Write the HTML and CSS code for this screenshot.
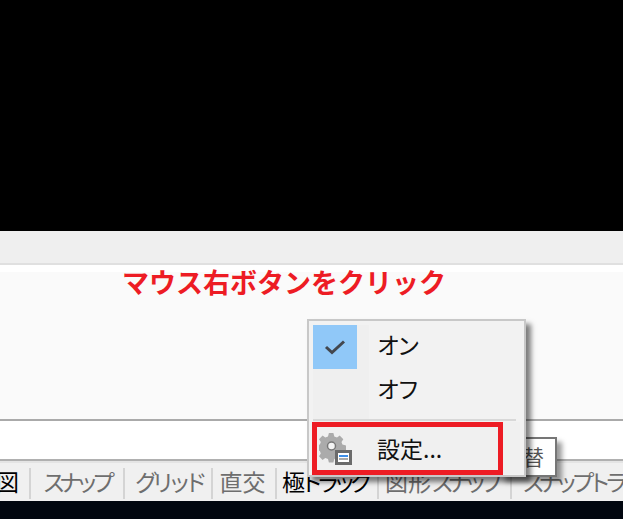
FILE: index.html
```html
<!DOCTYPE html>
<html lang="ja">
<head>
<meta charset="utf-8">
<title>極トラッキング設定</title>
<link rel="stylesheet" href="styles.css">
</head>
<body>
<div class="page">
  <div class="black"></div>
  <div class="ribbon"></div>
  <div class="history">
    <div class="note">マウス右ボタンをクリック</div>
  </div>
  <div class="cmdline"></div>
  <div class="status">
    <div class="cell c0"><span class="on">図</span></div>
    <div class="cell c1"><span class="kana">スナップ</span></div>
    <div class="cell c2"><span class="kana">グリッド</span></div>
    <div class="cell c3"><span>直交</span></div>
    <div class="cell c4"><span class="on">極<span class="kana tight">トラック</span></span></div>
    <div class="cell c5"><span>図形<span class="kana">スナップ</span></span></div>
    <div class="cell c6"><span class="kana">スナップトラ</span></div>
  </div>
  <div class="task"></div>

  <div class="tip">替</div>
  <div class="menu">
    <div class="gutter"></div>
    <div class="row">
      <div class="lead">
        <div class="check">
          <svg width="22" height="15" viewBox="0 0 22 15"><path d="M2 7 L8 12.5 L20 1.5" fill="none" stroke="#43474e" stroke-width="3"/></svg>
        </div>
      </div>
      <div class="label short">オン</div>
    </div>
    <div class="row">
      <div class="lead"></div>
      <div class="label short">オフ</div>
    </div>
    <div class="sep"></div>
    <div class="row setting">
      <div class="lead">
        <svg class="gear" width="34" height="33" viewBox="0 0 34 33">
          <path d="M11 1h5l1 4 3 1 3-2 4 4-2 3 1 3 4 1v5l-4 1-1 3 2 3-4 4-3-2-3 1-1 4h-5l-1-4-3-1-3 2-4-4 2-3-1-3-4-1v-5l4-1 1-3-2-3 4-4 3 2 3-1z" transform="scale(.9)" fill="#ababab"/>
          <circle cx="12.5" cy="14" r="4" fill="#f4f4f4" stroke="#777" stroke-width="1.5"/>
          <rect x="17.5" y="19.5" width="14" height="12" fill="#fff" stroke="#6b6b6b" stroke-width="3"/>
          <rect x="20" y="23" width="9" height="2" fill="#3f8fe8"/>
          <rect x="20" y="26" width="9" height="2" fill="#a9a9a9"/>
        </svg>
      </div>
      <div class="label">設定...</div>
    </div>
  </div>
  <div class="redbox"></div>
</div>
</body>
</html>
```
FILE: styles.css
```css
* { box-sizing: border-box; margin: 0; padding: 0; }
html, body { width: 623px; height: 519px; overflow: hidden; background: #000; }
body { font-family: "Noto Sans CJK JP", "Noto Sans", sans-serif; }

.page { position: relative; width: 623px; height: 519px; display: flex; flex-direction: column; overflow: hidden; }
.black { height: 231px; background: #000; }
.ribbon { height: 34px; background: #efefef; border-bottom: 2px solid #e0e0e0; }
.history { height: 156px; background: #fafafa; border-top: 7px solid #fff; border-bottom: 2px solid #aaa; padding: 0 0 0 122px; }
.note { margin-top: -9px; font-size: 27px; line-height: 38px; font-weight: 700; color: #ed1c24; white-space: nowrap; }
.cmdline { height: 40px; background: #fff; border-bottom: 2px solid #b0b0b0; }

.status { height: 40px; background: #f0f0f0; border-top: 2px solid #e4e4e4; display: flex; font-size: 23px; color: #6e6e6e; white-space: nowrap; overflow: hidden; }
.cell { flex: none; height: 31px; margin-top: 5px; border-right: 2px solid #d4d4d4; line-height: 27px; text-align: center; overflow: hidden; }
.on { color: #000; }
.kana { letter-spacing: -6.5px; }
.tight { margin-left: -5px; }
.c0 { width: 31px; text-align: left; text-indent: -4px; }
.c1 { width: 94px; padding-right: 3px; }
.c2 { width: 88px; }
.c3 { width: 64px; text-indent: -3px; }
.c4 { width: 102px; text-align: left; padding-left: 5px; }
.c5 { width: 133px; text-align: left; padding-left: 6px; }
.c6 { width: 111px; text-align: left; padding-left: 10px; border-right: 0; }

.task { height: 18px; background: #01060f; }

.tip { position: absolute; left: 500px; top: 437px; width: 57px; height: 40px; background: #fff; border: 2px solid #767676; box-shadow: 5px 5px 5px rgba(0,0,0,.4); padding-left: 21px; font-size: 21px; line-height: 35px; color: #555; }

.menu { position: absolute; left: 307px; top: 319px; width: 219px; height: 158px; background: #f2f2f2; border: 2px solid #c8c8c8; padding: 4px; box-shadow: 5px 5px 5px rgba(0,0,0,.5); }
.gutter { position: absolute; left: 4px; top: 4px; bottom: 4px; width: 56px; background: #efefef; }
.row { position: relative; display: flex; align-items: center; height: 44px; }
.lead { width: 60px; flex: none; height: 44px; }
.check { width: 44px; height: 44px; background: #90c8f8; display: flex; align-items: center; justify-content: center; }
.label { padding-left: 4px; font-size: 23px; line-height: 44px; color: #111; }
.short { letter-spacing: -3px; margin-top: -7px; }
.sep { position: relative; height: 2px; margin: 6px 4px 1px 0; background: #d8d8d8; }
.setting { height: 52px; background: #f0f0f0; }
.setting .lead { display: flex; align-items: center; padding-left: 6px; height: 52px; }
.setting .label { line-height: 52px; }
.redbox { position: absolute; left: 312px; top: 422px; width: 191px; height: 53px; border: 5px solid #ed1c24; }
```
